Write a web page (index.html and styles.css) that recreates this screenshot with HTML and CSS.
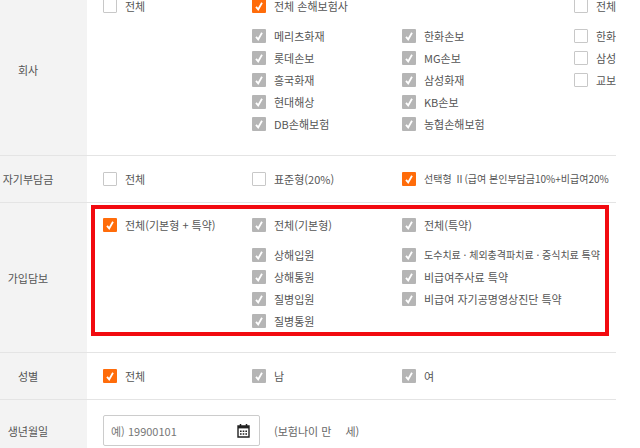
FILE: index.html
```html
<!DOCTYPE html>
<html lang="ko">
<head>
<meta charset="utf-8">
<title>실손의료보험 비교</title>
<link rel="stylesheet" href="styles.css">
</head>
<body>
<form class="filters">
  <section class="row row-group">
    <h2 class="row-label">회사</h2>
    <div class="options">
      <div class="column">
        <label class="option option-all"><input type="checkbox">전체</label>
      </div>
      <div class="column">
        <label class="option option-all"><input type="checkbox" checked>전체 손해보험사</label>
        <label class="option"><input type="checkbox" class="soft" checked>메리츠화재</label>
        <label class="option"><input type="checkbox" class="soft" checked>롯데손보</label>
        <label class="option"><input type="checkbox" class="soft" checked>흥국화재</label>
        <label class="option"><input type="checkbox" class="soft" checked>현대해상</label>
        <label class="option"><input type="checkbox" class="soft" checked>DB손해보험</label>
      </div>
      <div class="column column-rest">
        <label class="option"><input type="checkbox" class="soft" checked>한화손보</label>
        <label class="option"><input type="checkbox" class="soft" checked>MG손보</label>
        <label class="option"><input type="checkbox" class="soft" checked>삼성화재</label>
        <label class="option"><input type="checkbox" class="soft" checked>KB손보</label>
        <label class="option"><input type="checkbox" class="soft" checked>농협손해보험</label>
      </div>
      <div class="column">
        <label class="option option-all"><input type="checkbox">전체</label>
        <label class="option"><input type="checkbox">한화</label>
        <label class="option"><input type="checkbox">삼성</label>
        <label class="option"><input type="checkbox">교보</label>
      </div>
    </div>
  </section>

  <section class="row">
    <h2 class="row-label">자기부담금</h2>
    <div class="options">
      <label class="option"><input type="checkbox">전체</label>
      <label class="option"><input type="checkbox">표준형(20%)</label>
      <label class="option option-long"><input type="checkbox" checked>선택형 Ⅱ(급여 본인부담금10%+비급여20%</label>
    </div>
  </section>

  <section class="row row-group highlighted">
    <h2 class="row-label">가입담보</h2>
    <div class="options">
      <div class="column">
        <label class="option option-all"><input type="checkbox" checked>전체(기본형 + 특약)</label>
      </div>
      <div class="column">
        <label class="option option-all"><input type="checkbox" class="soft" checked>전체(기본형)</label>
        <label class="option"><input type="checkbox" class="soft" checked>상해입원</label>
        <label class="option"><input type="checkbox" class="soft" checked>상해통원</label>
        <label class="option"><input type="checkbox" class="soft" checked>질병입원</label>
        <label class="option"><input type="checkbox" class="soft" checked>질병통원</label>
      </div>
      <div class="column">
        <label class="option option-all"><input type="checkbox" class="soft" checked>전체(특약)</label>
        <label class="option option-long"><input type="checkbox" class="soft" checked>도수치료 · 체외충격파치료 · 증식치료 특약</label>
        <label class="option"><input type="checkbox" class="soft" checked>비급여주사료 특약</label>
        <label class="option"><input type="checkbox" class="soft" checked>비급여 자기공명영상진단 특약</label>
      </div>
    </div>
  </section>

  <section class="row">
    <h2 class="row-label">성별</h2>
    <div class="options">
      <label class="option"><input type="checkbox" checked>전체</label>
      <label class="option"><input type="checkbox" class="soft" checked>남</label>
      <label class="option"><input type="checkbox" class="soft" checked>여</label>
    </div>
  </section>

  <section class="row row-birth">
    <label class="row-label" for="birth">생년월일</label>
    <div class="birth">
      <div class="date-box">
        <input id="birth" type="text" placeholder="예) 19900101">
        <button type="button" class="calendar" aria-label="달력">
          <svg viewBox="0 0 13 14" width="13" height="14" aria-hidden="true">
            <path d="M3.5 0v3M9.5 0v3" stroke="#222" stroke-width="1.5"/>
            <path d="M1 2h11v11H1z" fill="none" stroke="#222" stroke-width="1.4"/>
            <path d="M1 3.2h11" stroke="#222" stroke-width="2.4"/>
            <path d="M3 7.2h7M3 10h7" stroke="#222" stroke-width="1.5" stroke-dasharray="1.6 1.1"/>
          </svg>
        </button>
      </div>
      <p class="age"><span>(보험나이 만</span><span>세)</span></p>
    </div>
  </section>
</form>
</body>
</html>
```

FILE: styles.css
```css
* {
  box-sizing: border-box;
}

body {
  margin: 0;
  overflow: hidden;
  background: #fff;
  color: #555;
  font-family: "Noto Sans CJK KR", "Noto Sans", sans-serif;
  font-size: 11px;
  line-height: 12px;
}

/* The form is scrolled slightly past its first row's top edge. */
.filters {
  margin: -16px 24px 0 0;
  overflow: hidden;
}

.row {
  position: relative;
  display: grid;
  grid-template-columns: 87px minmax(0, 1fr);
  border-bottom: 1px solid #e4e4e4;
}

.row-label {
  display: flex;
  align-items: center;
  justify-content: center;
  margin: 0;
  padding-right: 31px;
  background: #f3f3f3;
  font-size: 11px;
  font-weight: 400;
  white-space: nowrap;
}

.options {
  display: grid;
  grid-template-columns: minmax(0, 149fr) minmax(0, 150fr) minmax(0, 172fr) minmax(0, 42fr);
  padding: 17px 0 17px 16px;
}

.row-group .options {
  padding-top: 16px;
  padding-bottom: 25px;
}

.column {
  display: flex;
  flex-direction: column;
  gap: 10px;
}

.column-rest {
  padding-top: 30px;
}

.option {
  display: flex;
  align-items: center;
  gap: 8px;
  height: 12px;
  white-space: nowrap;
}

.option-all {
  margin-bottom: 8px;
}

.option-long {
  font-size: 10px;
}

.option input {
  flex: none;
  appearance: none;
  width: 14px;
  height: 14px;
  margin: 0;
  border: 1px solid #c8c8c8;
  border-radius: 1px;
  background: #fff;
}

.option input:checked {
  border: 0;
  background: #ff6c0a url("data:image/svg+xml,%3Csvg xmlns='http://www.w3.org/2000/svg' viewBox='0 0 14 14'%3E%3Cpath d='M4 7.8L6.2 10.4L10 3.8' fill='none' stroke='white' stroke-width='1.8'/%3E%3C/svg%3E");
}

.option .soft:checked {
  background-color: #b5b5b5;
}

.highlighted::after {
  content: "";
  position: absolute;
  inset: 2px 7px 16px 91px;
  border: 4px solid #f20a10;
  pointer-events: none;
}

.birth {
  display: flex;
  align-items: center;
  gap: 14px;
  padding: 15px 16px;
}

.date-box {
  display: flex;
  align-items: center;
  width: 157px;
  height: 31px;
  padding: 0 9px 0 7px;
  border: 1px solid #ccc;
  border-radius: 2px;
}

.date-box input {
  flex: 1;
  min-width: 0;
  padding: 0;
  border: 0;
  outline: 0;
  background: none;
  font: inherit;
}

.date-box input::placeholder {
  color: #777;
}

.calendar {
  display: flex;
  padding: 0;
  border: 0;
  background: none;
}

.age {
  display: flex;
  gap: 14px;
  margin: 0;
  color: #666;
}
```
